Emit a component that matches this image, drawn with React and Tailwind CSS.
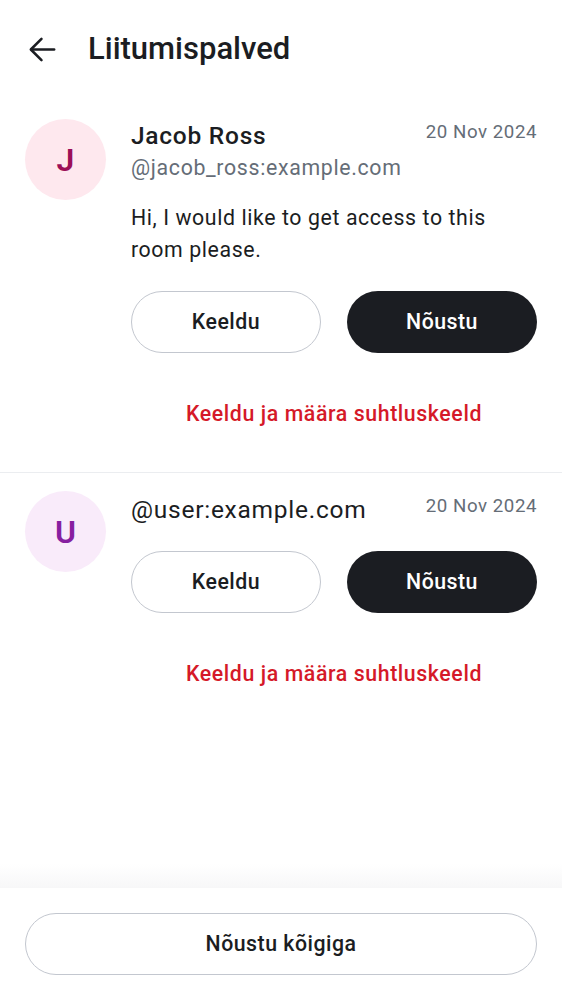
import { useState } from 'react';

const REQUESTS = [
  {
    id: 1,
    initial: 'J',
    name: 'Jacob Ross',
    handle: '@jacob_ross:example.com',
    message: 'Hi, I would like to get access to this room please.',
    date: '20 Nov 2024',
    avatarBg: 'bg-[#fee8ee]',
    avatarText: 'text-[#9c0f57]',
  },
  {
    id: 2,
    initial: 'U',
    name: '@user:example.com',
    handle: null,
    message: null,
    date: '20 Nov 2024',
    avatarBg: 'bg-[#f9ebfa]',
    avatarText: 'text-[#871fa0]',
  },
];

function BackArrow() {
  return (
    <svg width="35" height="35" viewBox="0 0 24 24" fill="none" stroke="#1b1d22" strokeWidth="1.75" strokeLinecap="round" strokeLinejoin="round">
      <path d="M20 12H4.6" />
      <path d="M11.3 4.7 4 12l7.3 7.3" />
    </svg>
  );
}

function RequestItem({ req, last }) {
  return (
    <div className={`flex gap-[25px] pl-[25px] pr-[25px] ${last ? 'pt-[18px]' : 'pt-[21px] pb-[27px] border-b border-[#ebedf0]'}`}>
      <div className={`w-[81px] h-[81px] shrink-0 rounded-full flex items-center justify-center ${req.avatarBg}`}>
        <span className={`text-[32px] font-semibold ${req.avatarText}`}>{req.initial}</span>
      </div>
      <div className={`flex-1 min-w-0 ${last ? 'pt-[5px]' : 'pt-[3px]'}`}>
        <div className="flex items-start justify-between">
          <p className={`leading-[28px] text-[24.5px] tracking-[0.75px] text-[#1b1d22] ${req.handle ? 'font-medium' : ''}`}>{req.name}</p>
          <span className="text-[18.7px] leading-[24px] text-[#656d77] tracking-[0.55px] -mt-[2px]">{req.date}</span>
        </div>
        {req.handle && (
          <p className="mt-[4px] text-[21.3px] leading-[28px] text-[#656d77] tracking-[0.67px]">{req.handle}</p>
        )}
        {req.message && (
          <p className="mt-[20px] text-[21.3px] leading-[32px] text-[#1b1d22] tracking-[0.6px] pr-[40px]">{req.message}</p>
        )}
        <div className={`grid grid-cols-2 gap-[26px] ${req.message ? 'mt-[25px]' : 'mt-[27px]'}`}>
          <button className="h-[62px] rounded-full border border-[#c3c7cf] bg-white text-[21.3px] font-medium text-[#1b1d22] tracking-[0.5px]">Keeldu</button>
          <button className="h-[62px] rounded-full bg-[#1b1d22] text-[21.3px] font-medium text-white tracking-[0.5px]">Nõustu</button>
        </div>
        <button className="mt-[30px] h-[62px] w-full flex items-center justify-center text-[21.3px] font-medium text-[#d51928] tracking-[0.6px]">
          Keeldu ja määra suhtluskeeld
        </button>
      </div>
    </div>
  );
}

export default function App() {
  const [requests] = useState(REQUESTS);

  return (
    <div className="h-screen flex flex-col bg-white font-['Roboto',sans-serif]">
      <div className="h-[98px] shrink-0 flex items-center pl-[25px]">
        <BackArrow />
        <h1 className="ml-[28px] text-[31px] font-medium text-[#1b1d22]">Liitumispalved</h1>
      </div>

      <div className="flex-1 overflow-hidden">
        {requests.map((req, i) => (
          <RequestItem key={req.id} req={req} last={i === requests.length - 1} />
        ))}
      </div>

      <div className="h-[24px] shrink-0 bg-gradient-to-b from-white to-[#f7f7f8]" />
      <div className="shrink-0 bg-white px-[25px] pt-[25px] pb-[25px]">
        <button className="h-[62px] w-full rounded-full border border-[#c3c7cf] bg-white text-[21.3px] font-medium text-[#1b1d22] tracking-[0.5px]">
          Nõustu kõigiga
        </button>
      </div>
    </div>
  );
}
